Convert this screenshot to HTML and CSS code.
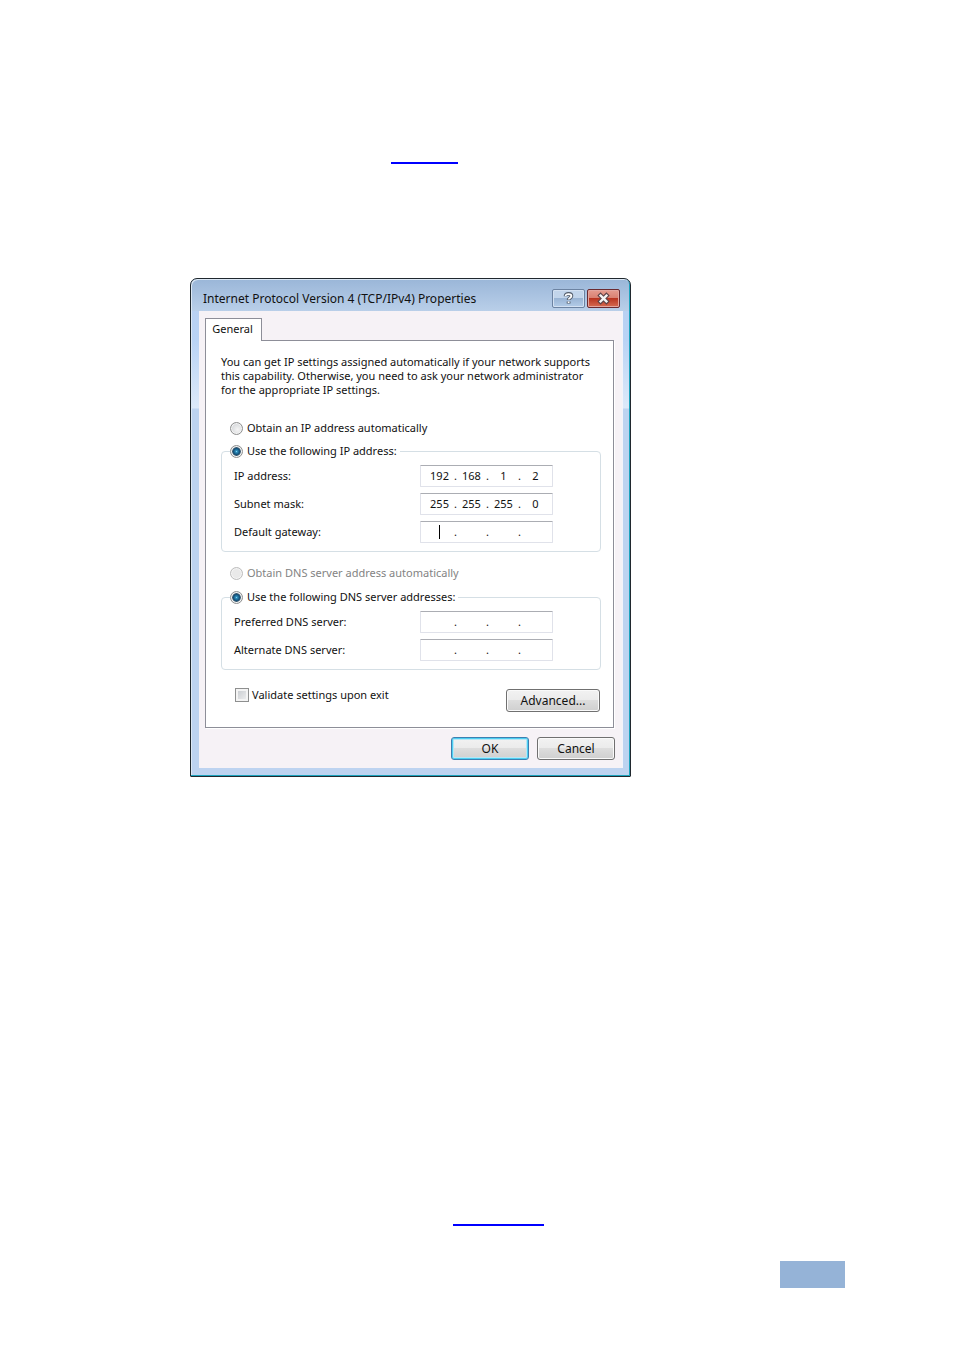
FILE: index.html
```
<!DOCTYPE html>
<html lang="en">
<head>
<meta charset="utf-8">
<title>Internet Protocol Version 4 (TCP/IPv4) Properties</title>
<link rel="stylesheet" href="styles.css">
</head>
<body>
<main class="page">
  <a class="rule-link rule-link-top" href="#top"></a>
  <form class="dialog">
    <header class="titlebar">
      <h1 class="title">Internet Protocol Version 4 (TCP/IPv4) Properties</h1>
      <button class="caption-btn" type="button">
        <svg width="13" height="13" viewBox="0 0 13 13"><path d="M3.6 4.3V3.9C3.6 1.2 9.4 1.2 9.4 4C9.4 6 6.6 6 6.6 8M6.6 9.4V11.4" fill="none" stroke="#56606e" stroke-width="3.8"/><path d="M3.6 3.9C3.6 1.4 9.4 1.4 9.4 4C9.4 6 6.6 6 6.6 7.6M6.6 9.4V10.9" fill="none" stroke="#fff" stroke-width="1.8"/></svg>
      </button>
      <button class="caption-btn caption-close" type="button">
        <svg width="13" height="13" viewBox="0 0 13 13"><path d="M3.6 3.6L9.4 9.4M9.4 3.6L3.6 9.4" fill="none" stroke="#5d4449" stroke-width="4.6" stroke-linecap="square"/><path d="M3.6 3.6L9.4 9.4M9.4 3.6L3.6 9.4" fill="none" stroke="#f4f4f4" stroke-width="2.4" stroke-linecap="square"/></svg>
      </button>
    </header>
    <div class="client">
      <button class="tab" type="button">General</button>
      <section class="panel">
        <p class="intro">You can get IP settings assigned automatically if your network supports<br>this capability. Otherwise, you need to ask your network administrator<br>for the appropriate IP settings.</p>
        <label class="choice"><input class="radio" type="radio" name="ip">Obtain an IP address automatically</label>
        <fieldset class="group">
          <legend class="legend"><label class="choice-label"><input class="radio" type="radio" name="ip" checked>Use the following IP address:</label></legend>
          <div class="row"><label for="ip1">IP address:</label><div class="address"><input id="ip1" class="octet" value="192">.<input class="octet" value="168">.<input class="octet" value="1">.<input class="octet" value="2"></div></div>
          <div class="row"><label for="mask1">Subnet mask:</label><div class="address"><input id="mask1" class="octet" value="255">.<input class="octet" value="255">.<input class="octet" value="255">.<input class="octet" value="0"></div></div>
          <div class="row"><label for="gw1">Default gateway:</label><div class="address"><input id="gw1" class="octet octet-active">.<input class="octet">.<input class="octet">.<input class="octet"></div></div>
        </fieldset>
        <label class="choice choice-disabled"><input class="radio" type="radio" name="dns" disabled>Obtain DNS server address automatically</label>
        <fieldset class="group">
          <legend class="legend"><label class="choice-label"><input class="radio" type="radio" name="dns" checked>Use the following DNS server addresses:</label></legend>
          <div class="row"><label for="dns1">Preferred DNS server:</label><div class="address"><input id="dns1" class="octet">.<input class="octet">.<input class="octet">.<input class="octet"></div></div>
          <div class="row"><label for="dns2">Alternate DNS server:</label><div class="address"><input id="dns2" class="octet">.<input class="octet">.<input class="octet">.<input class="octet"></div></div>
        </fieldset>
        <div class="options">
          <label class="validate"><input class="check" type="checkbox">Validate settings upon exit</label>
          <button class="btn btn-wide" type="button">Advanced...</button>
        </div>
      </section>
      <footer class="actions">
        <button class="btn btn-default" type="button">OK</button>
        <button class="btn" type="button">Cancel</button>
      </footer>
    </div>
  </form>
  <a class="rule-link rule-link-bottom" href="#bottom"></a>
  <div class="page-marker"></div>
</main>
</body>
</html>
```
FILE: styles.css
```
* { box-sizing: border-box; }
body { margin: 0; background: #fff; }
.page {
  display: flex;
  flex-direction: column;
  align-items: flex-start;
  padding: 162px 109px 66px 190px;
  font: 11px/14px "Noto Sans", sans-serif;
  color: #111;
}
.rule-link { height: 2px; background: #00f; }
.rule-link-top { width: 67px; margin-left: 201px; }
.rule-link-bottom { width: 91px; margin: 447px 0 0 263px; }
.page-marker { width: 65px; height: 27px; margin-top: 35px; align-self: flex-end; background: #95b3d7; }

.dialog {
  width: 100%;
  max-width: 441px;
  margin-top: 114px;
  padding: 0 7px 8px 8px;
  border: 1px solid #20282e;
  border-radius: 7px 7px 1px 1px;
  box-shadow: inset -1px -1px #1ba3bd, inset 1px 1px #dce8f5;
  background:
    linear-gradient(#9ab6d8, #b9cfe9) 0 0 / 100% 32px no-repeat,
    linear-gradient(#b9cff0, #b9d3f5 60px, #dce9f9 129px, #bdd3f0 130px);
}
.titlebar { display: flex; align-items: flex-start; gap: 2px; height: 32px; padding: 10px 3px 0 4px; }
.title { flex: 1; margin: 0; font-size: 12px; line-height: 20px; font-weight: 400; white-space: nowrap; }
.caption-btn {
  display: flex;
  align-items: center;
  justify-content: center;
  width: 33px;
  height: 19px;
  padding: 0;
  border: 1px solid #6c83a2;
  border-radius: 2px;
  box-shadow: inset 0 0 0 1px #d3e1f2;
  background: linear-gradient(#c2d5eb 48%, #9ab5d5 50%, #b3cce8);
}
.caption-close {
  border-color: #6b2a30;
  box-shadow: inset 0 0 0 1px #e3a69f;
  background: linear-gradient(#e59c90, #d98172 46%, #b93521 50%, #d66c52);
}
.client { padding: 7px 7px 8px 6px; background: #f6f2f6; border: 1px solid #f3f4fb; border-width: 0 1px 0 0; }
.tab {
  position: relative;
  z-index: 1;
  display: block;
  width: 57px;
  height: 23px;
  margin-bottom: -1px;
  padding: 0 2px 2px 0;
  border: 1px solid #8d8e98;
  border-bottom: 0;
  background: #fff;
  font: inherit;
  color: inherit;
}
.panel { margin-right: 1px; padding: 14px 12px 15px 15px; border: 1px solid #8d8e98; background: #fff; box-shadow: 1px 1px #fff; }
.intro { margin: 0 0 23px; white-space: nowrap; }
.choice, .choice-label, .validate { display: flex; align-items: center; height: 16px; white-space: nowrap; }
.choice { margin: 0 0 7px 9px; }
.choice-label, .choice { gap: 4px; }
.choice-disabled { margin-top: 13px; margin-bottom: 8px; color: #838383; }
.radio {
  appearance: none;
  width: 13px;
  height: 13px;
  margin: 0;
  border: 1px solid #8e8f8f;
  border-radius: 50%;
  background: radial-gradient(circle at 60% 60%, #f5f5f5, #c9ccd0);
  box-shadow: inset 0 0 0 1px #f4f4f4;
}
.radio:checked { background: radial-gradient(circle, #7fd0ee 0, #2e8dba 1px, #14527c 3px, #3b5a70 4px, #d4dade 5px); }
.radio:disabled { border-color: #bdbdbd; background: #e9e9e9; }
.group { min-width: 0; margin: 0; padding: 6px 47px 8px 12px; border: 1px solid #d5dfe5; border-radius: 4px; }
.legend { margin-left: -4px; padding: 0 3px 0 0; }
.row { display: flex; align-items: center; justify-content: space-between; height: 22px; }
.row + .row { margin-top: 6px; }
.address {
  display: flex;
  align-items: center;
  width: 133px;
  height: 22px;
  padding-left: 4px;
  border: 1px solid #e0e2ea;
  border-top-color: #abadb3;
  border-radius: 1px;
  background: #fff;
}
.octet { width: 29px; height: 18px; padding: 0 0 2px; border: 0; background: none; font: inherit; color: inherit; text-align: center; }
.octet-active { background: linear-gradient(#000, #000) center / 1px 14px no-repeat; }
.options { display: flex; align-items: flex-start; justify-content: space-between; margin-top: 17px; padding: 0 1px 0 14px; }
.validate { gap: 3px; }
.check {
  appearance: none;
  width: 14px;
  height: 14px;
  margin: 0;
  border: 1px solid #8e8f8f;
  background: linear-gradient(135deg, #c4c8cd, #f2f2f2);
  box-shadow: inset 0 0 0 2px #f4f4f4;
}
.btn {
  width: 78px;
  height: 23px;
  padding: 0;
  border: 1px solid #707070;
  border-radius: 3px;
  box-shadow: inset 0 0 0 1px #fafafa;
  background: linear-gradient(#f2f2f2, #ebebeb 48%, #dddddd 50%, #cfcfcf);
  font: inherit;
  font-size: 12px;
  color: inherit;
}
.btn-wide { width: 94px; margin-top: 2px; }
.btn-default { border-color: #3c7fb1; box-shadow: inset 0 0 0 1px #4dcff2, inset 0 0 0 2px #b8e6f5; }
.actions { display: flex; justify-content: flex-end; gap: 8px; margin-top: 9px; }
```
